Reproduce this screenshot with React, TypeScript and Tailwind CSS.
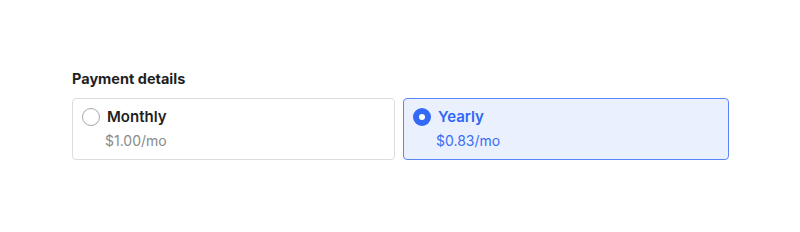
import { useState } from 'react'

const PLANS = [
  { id: 'monthly', name: 'Monthly', price: '$1.00/mo' },
  { id: 'yearly', name: 'Yearly', price: '$0.83/mo' },
]

export default function App() {
  const [selected, setSelected] = useState('yearly')

  return (
    <div className="w-[800px] h-[232px] bg-white pt-[69px] px-[72px] font-['Inter',sans-serif]">
      <h2 className="text-[14.5px] leading-[20px] font-bold text-[#1f1f1f] mb-[9px]">Payment details</h2>
      <div className="grid grid-cols-[323px_326px] gap-[8px]">
        {PLANS.map((p) => {
          const active = selected === p.id
          return (
            <button
              key={p.id}
              type="button"
              onClick={() => setSelected(p.id)}
              className={`flex items-start gap-[7px] text-left rounded-[4px] border px-[9px] pt-[7px] pb-[7px] ${
                active ? 'border-[#5b86f7] bg-[#ebf0fe]' : 'border-[#dcdcdc] bg-white'
              }`}
            >
              {active ? (
                <span className="mt-[2px] w-[18px] h-[18px] rounded-full bg-[#3369f5] flex items-center justify-center shrink-0">
                  <span className="w-[6px] h-[6px] rounded-full bg-white" />
                </span>
              ) : (
                <span className="mt-[2px] w-[18px] h-[18px] rounded-full border border-[#a8a8a8] bg-white shrink-0" />
              )}
              <span className="flex flex-col">
                <span className={`text-[15px] leading-[22px] font-semibold ${active ? 'text-[#2f66f4]' : 'text-[#1f1f1f]'}`}>
                  {p.name}
                </span>
                <span className={`mt-[2px] -ml-[2px] text-[14px] leading-[22px] ${active ? 'text-[#3a6ef5]' : 'text-[#8a8a8a]'}`}>
                  {p.price}
                </span>
              </span>
            </button>
          )
        })}
      </div>
    </div>
  )
}
